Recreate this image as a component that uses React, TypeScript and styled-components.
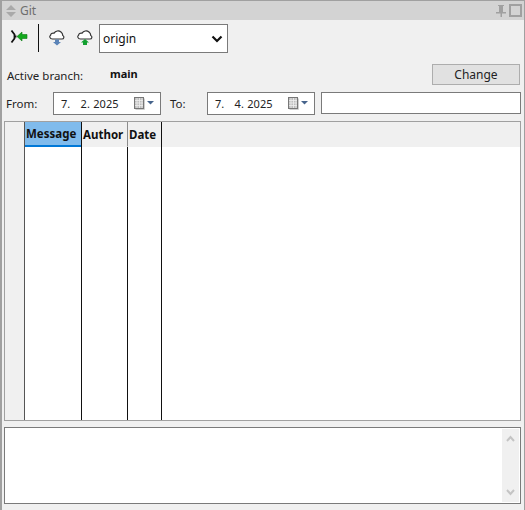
import React from "react";
import styled, { createGlobalStyle } from "styled-components";

const Global = createGlobalStyle`
  html, body { margin: 0; padding: 0; background: #f0f0f0; }
  body { font-family: "Noto Sans", "Open Sans", Arial, sans-serif; }
  #root { width: 525px; height: 510px; }
`;

const Panel = styled.div`
  box-sizing: border-box;
  width: 525px;
  height: 510px;
  display: flex;
  flex-direction: column;
  background: #f0f0f0;
  border: 1px solid #a0a0a0;
  border-width: 1px 1px 0 2px;
  overflow: hidden;
`;

const TitleBar = styled.div`
  height: 19px;
  flex: none;
  display: flex;
  align-items: center;
  background: #d3d3d3;
  color: #6e6e6e;
  font-size: 12px;
  padding: 0 0 0 3px;
`;

const TitleText = styled.span`
  margin-left: 3px;
  flex: 1;
`;

const TitleIcons = styled.div`
  display: flex;
  align-items: center;
  gap: 3px;
  margin-right: 2px;
`;

const Toolbar = styled.div`
  height: 31px;
  margin-top: 4px;
  flex: none;
  display: flex;
  align-items: flex-start;
`;

const ToolIcon = styled.div<{ $left: number }>`
  width: 20px;
  height: 20px;
  margin: 5px 0 0 ${(p) => p.$left}px;
  flex: none;
  display: flex;
`;

const ToolSep = styled.div`
  width: 1px;
  height: 28px;
  margin-left: 9px;
  background: #111;
  flex: none;
`;

const SelectBox = styled.div`
  box-sizing: border-box;
  width: 129px;
  height: 29px;
  margin-left: 4px;
  border: 1px solid #7a7a7a;
  background: #fff;
  display: flex;
  align-items: center;
  justify-content: space-between;
  padding: 0 4px 0 3px;
  font-size: 12px;
  color: #111;
`;

const BranchRow = styled.div`
  height: 21px;
  margin-top: 9px;
  flex: none;
  display: flex;
  align-items: center;
  font-size: 11.5px;
  color: #222;
`;

const BranchLabel = styled.span`
  width: 103px;
  margin-left: 5px;
  margin-top: 1px;
  flex: none;
`;

const BranchName = styled.span`
  font-weight: 700;
  font-size: 11px;
  flex: 1;
  color: #111;
  margin-top: -3px;
`;

const ChangeButton = styled.button`
  box-sizing: border-box;
  width: 88px;
  height: 21px;
  margin-right: 4px;
  border: 1px solid #adadad;
  background: #e1e1e1;
  font-family: inherit;
  font-size: 12px;
  color: #222;
  padding: 0;
`;

const DateRow = styled.div`
  height: 23px;
  margin-top: 7px;
  flex: none;
  display: flex;
  align-items: center;
  font-size: 11.5px;
  color: #222;
`;

const DateLabel = styled.span<{ $w: number; $ml: number }>`
  width: ${(p) => p.$w}px;
  margin-left: ${(p) => p.$ml}px;
  flex: none;
`;

const DateBox = styled.div`
  box-sizing: border-box;
  width: 108px;
  height: 23px;
  border: 1px solid #7a7a7a;
  background: #fff;
  display: flex;
  align-items: center;
  flex: none;
  padding-left: 7px;
  font-size: 11px;
  color: #222;
`;

const DateText = styled.span`
  flex: 1;
  white-space: pre;
  word-spacing: 0.6px;
`;

const FilterInput = styled.div`
  box-sizing: border-box;
  width: 200px;
  height: 22px;
  margin: 0 0 1px 6px;
  border: 1px solid #7a7a7a;
  background: #fff;
  flex: none;
`;

const Table = styled.div`
  box-sizing: border-box;
  width: 517px;
  height: 300px;
  margin: 6px 0 0 2px;
  flex: none;
  border: 1px solid #a0a0a0;
  background: #fff;
  display: flex;
`;

const RowHeader = styled.div`
  box-sizing: border-box;
  width: 20px;
  flex: none;
  background: #f0f0f0;
  border-right: 1px solid #555;
`;

const Column = styled.div<{ $w: number }>`
  box-sizing: border-box;
  width: ${(p) => p.$w}px;
  flex: none;
  border-right: 1px solid #111;
  display: flex;
  flex-direction: column;
`;

const HeaderCell = styled.div<{ $active?: boolean; $divider?: boolean }>`
  box-sizing: border-box;
  height: 25px;
  flex: none;
  font-size: 11.5px;
  font-weight: 700;
  color: #111;
  display: flex;
  align-items: center;
  padding-left: 1px;
  white-space: nowrap;
  background: ${(p) => (p.$active ? "#80bbec" : "#f0f0f0")};
  border-bottom: ${(p) => (p.$active ? "2px solid #0078d7" : "1px solid #f0f0f0")};
  ${(p) => (p.$divider ? "margin-right: -1px; border-right: 1px solid #8c8c8c;" : "")}
`;

const HeaderFill = styled.div`
  flex: 1;
  height: 25px;
  background: #f0f0f0;
`;

const Details = styled.div`
  box-sizing: border-box;
  width: 517px;
  height: 77px;
  margin: 6px 0 0 2px;
  flex: none;
  border: 1px solid #7a7a7a;
  background: #fff;
  display: flex;
  justify-content: flex-end;
  padding: 1px;
`;

const ScrollBar = styled.div`
  width: 17px;
  background: #f0f0f0;
  display: flex;
  flex-direction: column;
  justify-content: space-between;
  align-items: center;
  padding: 6px 0;
`;

const Pin = () => (
  <svg width="10" height="12" viewBox="0 0 10 12" fill="#a0a0a0">
    <path d="M2 0h6v1H7v6h3v1.5H6V12H4.5V8.5H0V7h3V1H2z" />
  </svg>
);

const Maximize = () => (
  <svg width="13" height="13" viewBox="0 0 13 13" fill="none" stroke="#a0a0a0" strokeWidth="2">
    <rect x="1" y="1" width="11" height="11" />
  </svg>
);

const Grip = () => (
  <svg width="12" height="14" viewBox="0 0 12 14" fill="#a9a9a9">
    <path d="M6 1l5 5H1zM1 8h10l-5 5z" />
  </svg>
);

const Merge = () => (
  <svg width="20" height="20" viewBox="0 0 20 20">
    <path d="M2.5 1.5l3 4v4l-3 4M5.5 7.5h2" fill="none" stroke="#111" strokeWidth="1.8" />
    <path d="M8 7.5l5-4.5v2.5h5v4h-5V12z" fill="#12a81c" stroke="#0b7a12" strokeWidth=".6" />
  </svg>
);

const Cloud = ({ color, up }: { color: string; up?: boolean }) => (
  <svg width="20" height="20" viewBox="0 0 20 20">
    <path
      d="M5.5 10h9.5c2 0 2.6-2.6.8-3.5C15.6 3.5 13 1.5 10.2 2 8.6 2.3 7.6 3.3 7 4.2 5.2 3.6 3.6 4.8 3.6 6.2 2 7 2.7 10 5.5 10z"
      fill="#fff"
      stroke="#333"
      strokeWidth="1.2"
    />
    {up ? (
      <path d="M10 10l4 3.5h-2V16H8v-2.5H6z" fill={color} />
    ) : (
      <path d="M8 10.5h4v2.5h2l-4 3.5L6 13h2z" fill={color} />
    )}
  </svg>
);

const Chevron = () => (
  <svg width="12" height="8" viewBox="0 0 12 8" fill="none" stroke="#111" strokeWidth="2.2">
    <path d="M1.5 1.5L6 6l4.5-4.5" />
  </svg>
);

const Calendar = () => (
  <svg width="28" height="15" viewBox="0 0 28 15">
    <path d="M12.5 2.5v11h-9" fill="none" stroke="#cfcfcf" />
    <rect x="2.5" y="1.5" width="9" height="11" fill="#bdbdbd" stroke="#777" />
    <path d="M3 4.5h8M3 7h8M3 9.5h8M5 2v10M7.5 2v10M10 2v10" stroke="#efefef" strokeWidth=".8" />
    <path d="M15 5h7l-3.5 3.5z" fill="#46648c" />
  </svg>
);

const ScrollArrow = ({ up }: { up?: boolean }) => (
  <svg width="9" height="7" viewBox="0 0 9 7" fill="none" stroke="#c4c4c4" strokeWidth="2">
    <path d={up ? "M1 6l3.5-4L8 6" : "M1 1l3.5 4L8 1"} />
  </svg>
);

export default function App() {
  return (
    <>
      <Global />
      <Panel>
        <TitleBar>
          <Grip />
          <TitleText>Git</TitleText>
          <TitleIcons>
            <Pin />
            <Maximize />
          </TitleIcons>
        </TitleBar>
        <Toolbar>
          <ToolIcon $left={7}>
            <Merge />
          </ToolIcon>
          <ToolSep />
          <ToolIcon $left={8}>
            <Cloud color="#5b84b8" />
          </ToolIcon>
          <ToolIcon $left={8}>
            <Cloud color="#12a030" up />
          </ToolIcon>
          <SelectBox>
            origin
            <Chevron />
          </SelectBox>
        </Toolbar>
        <BranchRow>
          <BranchLabel>Active branch:</BranchLabel>
          <BranchName>main</BranchName>
          <ChangeButton>Change</ChangeButton>
        </BranchRow>
        <DateRow>
          <DateLabel $w={47} $ml={4}>From:</DateLabel>
          <DateBox>
            <DateText>7.   2. 2025</DateText>
            <Calendar />
          </DateBox>
          <DateLabel $w={37} $ml={9}>To:</DateLabel>
          <DateBox>
            <DateText>7.   4. 2025</DateText>
            <Calendar />
          </DateBox>
          <FilterInput />
        </DateRow>
        <Table>
          <RowHeader />
          <Column $w={57}>
            <HeaderCell $active>Message</HeaderCell>
          </Column>
          <Column $w={46}>
            <HeaderCell $divider>Author</HeaderCell>
          </Column>
          <Column $w={34}>
            <HeaderCell>Date</HeaderCell>
          </Column>
          <HeaderFill />
        </Table>
        <Details>
          <ScrollBar>
            <ScrollArrow up />
            <ScrollArrow />
          </ScrollBar>
        </Details>
      </Panel>
    </>
  );
}
